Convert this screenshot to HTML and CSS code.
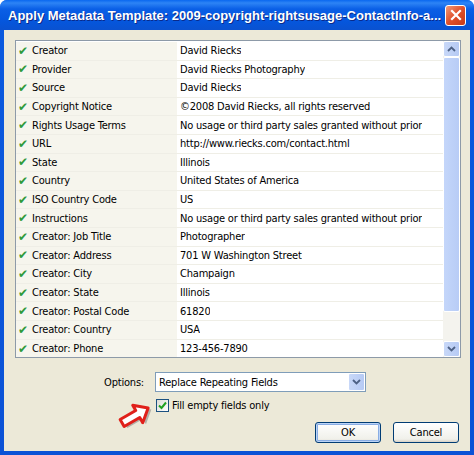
FILE: index.html
```html
<!DOCTYPE html>
<html>
<head>
<meta charset="utf-8">
<link rel="stylesheet" href="styles.css">
</head>
<body>
<div class="window">
  <div class="titlebar">
    <span class="title">Apply Metadata Template: 2009-copyright-rightsusage-ContactInfo-a...</span>
    <span class="close"><svg width="12" height="12" viewBox="0 0 12 12"><path d="M2 2L10 10M10 2L2 10" stroke="#fff" stroke-width="2.2" stroke-linecap="square"/></svg></span>
  </div>
  <div class="client">
    <div class="listbox">
      <div class="rows">
        <div class="row"><span class="lab"><i class="chk">✔</i>Creator</span><span class="val">David Riecks</span></div>
        <div class="row"><span class="lab"><i class="chk">✔</i>Provider</span><span class="val">David Riecks Photography</span></div>
        <div class="row"><span class="lab"><i class="chk">✔</i>Source</span><span class="val">David Riecks</span></div>
        <div class="row"><span class="lab"><i class="chk">✔</i>Copyright Notice</span><span class="val">©2008 David Riecks, all rights reserved</span></div>
        <div class="row"><span class="lab"><i class="chk">✔</i>Rights Usage Terms</span><span class="val">No usage or third party sales granted without prior</span></div>
        <div class="row"><span class="lab"><i class="chk">✔</i>URL</span><span class="val">http://www.riecks.com/contact.html</span></div>
        <div class="row"><span class="lab"><i class="chk">✔</i>State</span><span class="val">Illinois</span></div>
        <div class="row"><span class="lab"><i class="chk">✔</i>Country</span><span class="val">United States of America</span></div>
        <div class="row"><span class="lab"><i class="chk">✔</i>ISO Country Code</span><span class="val">US</span></div>
        <div class="row"><span class="lab"><i class="chk">✔</i>Instructions</span><span class="val">No usage or third party sales granted without prior</span></div>
        <div class="row"><span class="lab"><i class="chk">✔</i>Creator: Job Title</span><span class="val">Photographer</span></div>
        <div class="row"><span class="lab"><i class="chk">✔</i>Creator: Address</span><span class="val">701 W Washington Street</span></div>
        <div class="row"><span class="lab"><i class="chk">✔</i>Creator: City</span><span class="val">Champaign</span></div>
        <div class="row"><span class="lab"><i class="chk">✔</i>Creator: State</span><span class="val">Illinois</span></div>
        <div class="row"><span class="lab"><i class="chk">✔</i>Creator: Postal Code</span><span class="val">61820</span></div>
        <div class="row"><span class="lab"><i class="chk">✔</i>Creator: Country</span><span class="val">USA</span></div>
        <div class="row"><span class="lab"><i class="chk">✔</i>Creator: Phone</span><span class="val">123-456-7890</span></div>
      </div>
      <div class="scrollbar">
        <div class="sbtn"><svg width="9" height="6" viewBox="0 0 9 6"><path d="M1 5L4.5 1.5L8 5" fill="none" stroke="#4D6185" stroke-width="1.8"/></svg></div>
        <div class="thumb"></div>
        <div class="track"></div>
        <div class="sbtn"><svg width="9" height="6" viewBox="0 0 9 6"><path d="M1 1L4.5 4.5L8 1" fill="none" stroke="#4D6185" stroke-width="1.8"/></svg></div>
      </div>
    </div>
    <div class="options">
      <span class="optlabel">Options:</span>
      <div class="combo">
        <span class="combotext">Replace Repeating Fields</span>
        <span class="cbtn"><svg width="9" height="6" viewBox="0 0 9 6"><path d="M1 1L4.5 4.5L8 1" fill="none" stroke="#4D6185" stroke-width="1.8"/></svg></span>
      </div>
    </div>
    <div class="checkrow">
      <span class="checkbox"><svg width="11" height="11" viewBox="0 0 11 11"><path d="M2 5.5L4.5 8L9 2.5" fill="none" stroke="#21A121" stroke-width="2"/></svg></span>
      <span class="checklabel">Fill empty fields only</span>
      <svg class="arrow" width="40" height="34" viewBox="0 0 40 34">
        <g transform="translate(20 18) rotate(-30)">
          <path d="M-16 -4H2V-10L14 0L2 10V4H-16Z" fill="#777" opacity="0.5" transform="translate(2 3)"/>
          <path d="M-16 -4H2V-10L14 0L2 10V4H-16Z" fill="#fff" stroke="#E0201A" stroke-width="3" stroke-linejoin="round"/>
        </g>
      </svg>
    </div>
    <div class="buttons">
      <span class="btn default">OK</span>
      <span class="btn">Cancel</span>
    </div>
  </div>
</div>
</body>
</html>
```

FILE: styles.css
```css
html, body {
  margin: 0;
  padding: 0;
}
body {
  width: 474px;
  height: 455px;
  overflow: hidden;
  font-family: "DejaVu Sans Condensed", "DejaVu Sans", sans-serif;
  font-size: 11px;
  letter-spacing: -0.2px;
  color: #000;
}
.window {
  width: 474px;
  height: 455px;
  box-sizing: border-box;
  background: linear-gradient(to bottom, #0A5ADF, #0B52D6);
  display: flex;
  flex-direction: column;
  border-radius: 7px 7px 0 0;
}
.titlebar {
  height: 30px;
  flex: none;
  display: flex;
  align-items: center;
  padding: 0 8px 0 8px;
  background: linear-gradient(to bottom, #0A68F0 0%, #2D84F5 10%, #0A5FE6 30%, #0556DD 70%, #0A52D0 100%);
  border-radius: 7px 7px 0 0;
}
.title {
  flex: 1;
  color: #fff;
  font-family: "Liberation Sans", Arial, sans-serif;
  font-weight: bold;
  font-size: 13px;
  letter-spacing: 0;
  white-space: nowrap;
  text-shadow: 1px 1px 0 #0A2A8A;
}
.close {
  width: 21px;
  height: 21px;
  box-sizing: border-box;
  border: 1px solid #fff;
  border-radius: 3px;
  background: linear-gradient(135deg, #F09A7A, #E0502A 50%, #C83A18);
  display: flex;
  align-items: center;
  justify-content: center;
}
.client {
  flex: 1;
  margin: 0 4px 4px 4px;
  background: #ECE9D8;
  padding: 10px 9px 0 11px;
  display: flex;
  flex-direction: column;
  min-width: 0;
}
.listbox {
  height: 318px;
  box-sizing: border-box;
  border: 1px solid #8D9AA8;
  display: flex;
  background: #fff;
  min-width: 0;
}
.rows {
  flex: 1;
  min-width: 0;
  overflow: hidden;
  display: flex;
  flex-direction: column;
  padding-top: 1px;
}
.row {
  height: 18.6px;
  flex: none;
  display: flex;
  align-items: center;
  box-sizing: border-box;
  border-bottom: 1px solid #EFEEE6;
}
.row:last-child { border-bottom: none; }
.lab {
  width: 161px;
  flex: none;
  height: 100%;
  box-sizing: border-box;
  background: #F6F5ED;
  display: flex;
  align-items: center;
  padding-left: 2px;
  white-space: nowrap;
}
.chk {
  font-style: normal;
  color: #2F9A3C;
  font-size: 12px;
  width: 14px;
  font-family: "DejaVu Sans", sans-serif;
}
.val {
  padding-left: 3px;
  white-space: nowrap;
  overflow: hidden;
  min-width: 0;
}
.scrollbar {
  width: 17px;
  flex: none;
  display: flex;
  flex-direction: column;
  background: #F4F3EE;
}
.sbtn {
  height: 16px;
  flex: none;
  box-sizing: border-box;
  border: 1px solid #fff;
  border-radius: 2px;
  background: linear-gradient(to right, #C8D8F8, #B6CAF4);
  display: flex;
  align-items: center;
  justify-content: center;
}
.thumb {
  height: 255px;
  flex: none;
  box-sizing: border-box;
  border: 1px solid #fff;
  border-radius: 2px;
  background: linear-gradient(to right, #C4D6FA, #B8CCF6);
}
.track { flex: 1; }
.options {
  display: flex;
  align-items: center;
  margin-top: 14px;
  height: 20px;
}
.optlabel {
  width: 140px;
  text-align: right;
  padding-right: 11px;
  box-sizing: border-box;
}
.combo {
  width: 211px;
  height: 20px;
  box-sizing: border-box;
  border: 1px solid #7F9DB9;
  background: #fff;
  display: flex;
  align-items: center;
}
.combotext { flex: 1; padding-left: 3px; }
.cbtn {
  width: 17px;
  height: 18px;
  box-sizing: border-box;
  border: 1px solid #fff;
  border-radius: 2px;
  background: linear-gradient(to right, #C8D8F8, #B6CAF4);
  display: flex;
  align-items: center;
  justify-content: center;
}
.checkrow {
  display: flex;
  align-items: center;
  margin-top: 5px;
  padding-left: 141px;
  position: relative;
  height: 16px;
}
.checkbox {
  width: 13px;
  height: 13px;
  box-sizing: border-box;
  border: 1px solid #1C5180;
  background: linear-gradient(135deg, #DCDCD6, #fff);
  display: flex;
  align-items: center;
  justify-content: center;
  margin-right: 3px;
}
.arrow {
  position: absolute;
  left: 101px;
  top: 0px;
}
.buttons {
  display: flex;
  justify-content: flex-end;
  gap: 12px;
  margin-top: 9px;
  margin-right: 2px;
}
.btn {
  width: 66px;
  height: 21px;
  box-sizing: border-box;
  border: 1px solid #003C74;
  border-radius: 3px;
  background: linear-gradient(to bottom, #FFFFFF, #F0F0EA 85%, #D6D0C5);
  display: flex;
  align-items: center;
  justify-content: center;
}
.btn.default {
  box-shadow: inset 0 0 0 1px #BCD4F6, inset 0 0 0 2px #89ADE4;
}
```
